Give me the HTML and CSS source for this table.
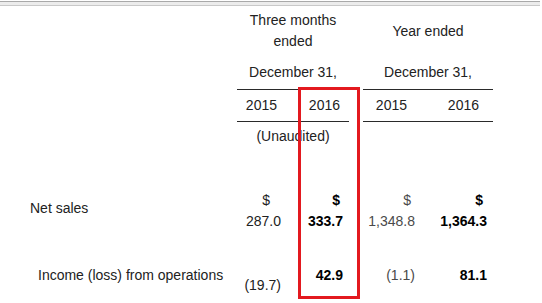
FILE: index.html
```html
<!DOCTYPE html>
<html>
<head>
<meta charset="utf-8">
<link rel="stylesheet" href="styles.css">
</head>
<body>
<div class="bar"></div>
<div class="fin">
  <div class="hd grp-a pt-head">Three months<br>ended</div>
  <div class="hd grp-b pt-year">Year ended</div>

  <div class="hd grp-a dec">December 31,</div>
  <div class="hd grp-b dec">December 31,</div>

  <div class="yr col-b">2015</div>
  <div class="yr col-c">2016</div>
  <div class="yr col-e">2015</div>
  <div class="yr col-f">2016</div>

  <div class="hd grp-a unaud">(Unaudited)</div>

  <div class="label r1">Net sales</div>
  <div class="val col-b r1v"><span class="cur cb">$</span><span>287.0</span></div>
  <div class="val col-c r1v bold"><span class="cur cc">$</span><span>333.7</span></div>
  <div class="val col-e r1v grey"><span class="cur ce">$</span><span>1,348.8</span></div>
  <div class="val col-f r1v bold"><span class="cur cf">$</span><span>1,364.3</span></div>

  <div class="label r2">Income (loss) from operations</div>
  <div class="val col-b r2low">(19.7)</div>
  <div class="val col-c r2v bold">42.9</div>
  <div class="val col-e r2v grey">(1.1)</div>
  <div class="val col-f r2v bold">81.1</div>
</div>
<div class="highlight"></div>
</body>
</html>
```

FILE: styles.css
```css
html, body {
  margin: 0;
  padding: 0;
  background: #fff;
}
body {
  font-family: "Liberation Sans", Arial, sans-serif;
  font-size: 14px;
  line-height: 21px;
  color: #222;
  width: 542px;
  height: 303px;
  overflow: hidden;
}
.bar {
  margin-top: 1px;
  width: 540px;
  height: 3px;
  background: #ececec;
  border-top: 1px solid #a9a9a9;
  border-bottom: 1px solid #c9c9c9;
}
.fin {
  display: grid;
  grid-template-columns: 237px 49px 63px 14px 57px 73px;
  align-items: start;
}
.hd { text-align: center; white-space: nowrap; }
.grp-a { grid-column: 2 / 4; }
.grp-b { grid-column: 5 / 7; }
.pt-head { grid-row: 1; padding-top: 4px; }
.pt-year { grid-row: 1; padding-top: 15px; }
.dec {
  grid-row: 2;
  padding-top: 10px;
  padding-bottom: 6px;
  border-bottom: 1px solid #2a2a2a;
}
.yr {
  grid-row: 3;
  padding-top: 5px;
  padding-bottom: 5px;
  border-bottom: 1px solid #2a2a2a;
  text-align: right;
}
.col-b { grid-column: 2; }
.col-c { grid-column: 3; }
.col-e { grid-column: 5; }
.col-f { grid-column: 6; }
.yr.col-b { padding-right: 9px; }
.yr.col-c { padding-right: 9px; }
.yr.col-e { padding-right: 13px; }
.yr.col-f { padding-right: 14px; }
.unaud { grid-row: 4; padding-top: 4px; }

.label { grid-column: 1; white-space: nowrap; }
.label.r1 { grid-row: 5; padding-top: 51px; padding-left: 30px; }
.label.r2 { grid-row: 6; padding-top: 33px; padding-left: 38px; }

.val {
  display: flex;
  flex-direction: column;
  align-items: flex-end;
  white-space: nowrap;
}
.val.col-b { padding-right: 5px; }
.val.col-c { padding-right: 6px; }
.val.col-e { padding-right: 5px; }
.val.col-f { padding-right: 6px; }
.r1v, .col-b.r1v { grid-row: 5; padding-top: 43px; }
.r2v { grid-row: 6; padding-top: 33px; }
.r2low { grid-row: 6; padding-top: 43px; }
.cur.cb { margin-right: 11px; }
.cur.cc { margin-right: 3px; }
.cur.ce { margin-right: 4px; }
.cur.cf { margin-right: 4px; }
.bold { font-weight: bold; color: #000; }
.grey { color: #4a4a4a; }

.highlight {
  position: absolute;
  left: 298px;
  top: 87px;
  width: 56px;
  height: 206px;
  border: 3px solid #e3191f;
}
```
